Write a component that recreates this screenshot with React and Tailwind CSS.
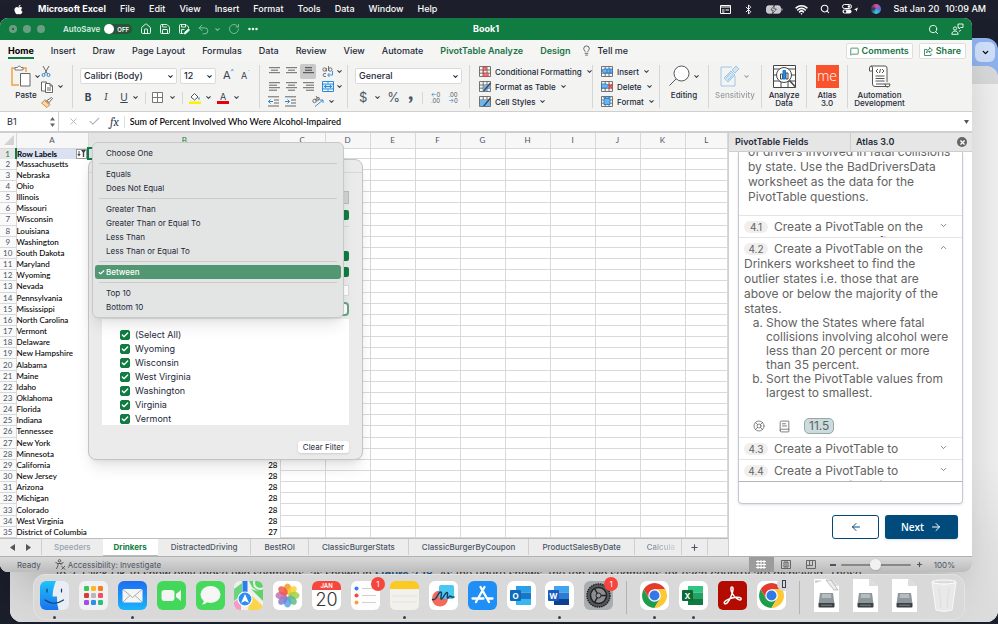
import { useState } from 'react';
import {
  ArrowLeft,
  ArrowRight,
  Bluetooth,
  BookText,
  Check,
  ChevronDown,
  ChevronUp,
  Ellipsis,
  House,
  LifeBuoy,
  Lightbulb,
  MessageSquare,
  Plus,
  RotateCw,
  Save,
  Search,
  Undo2,
  Wifi,
  X,
} from 'lucide-react';
import { FaApple } from 'react-icons/fa';

const menus = ['File', 'Edit', 'View', 'Insert', 'Format', 'Tools', 'Data', 'Window', 'Help'];
const ribbonTabs = ['Home', 'Insert', 'Draw', 'Page Layout', 'Formulas', 'Data', 'Review', 'View', 'Automate'];
const columns = ['C', 'D', 'E', 'F', 'G', 'H', 'I', 'J', 'K', 'L'];
const sheetRows = [
  'Row Labels', 'Massachusetts', 'Nebraska', 'Ohio', 'Illinois', 'Missouri', 'Wisconsin', 'Louisiana', 'Washington',
  'South Dakota', 'Maryland', 'Wyoming', 'Nevada', 'Pennsylvania', 'Mississippi', 'North Carolina', 'Vermont',
  'Delaware', 'New Hampshire', 'Alabama', 'Maine', 'Idaho', 'Oklahoma', 'Florida', 'Indiana', 'Tennessee', 'New York',
  'Minnesota', 'California', 'New Jersey', 'Arizona', 'Michigan', 'Colorado', 'West Virginia', 'District of Columbia',
];
const values = { 29: 28, 30: 28, 31: 28, 32: 28, 33: 28, 34: 28, 35: 27 };
const filterGroups = [
  ['Choose One'],
  ['Equals', 'Does Not Equal'],
  ['Greater Than', 'Greater Than or Equal To', 'Less Than', 'Less Than or Equal To'],
  ['Between'],
  ['Top 10', 'Bottom 10'],
];
const states = ['(Select All)', 'Wyoming', 'Wisconsin', 'West Virginia', 'Washington', 'Virginia', 'Vermont'];
const sheetTabs = ['DistractedDriving', 'BestROI', 'ClassicBurgerStats', 'ClassicBurgerByCoupon', 'ProductSalesByDate'];

function Caret({ className = 'text-gray-700' }) {
  return <ChevronDown size={7} strokeWidth={3.5} className={`shrink-0 ${className}`} />;
}

function RibbonIcon({ label, children, className = '' }) {
  return (
    <button type="button" aria-label={label} className={`flex items-center justify-center ${className}`}>
      {children}
    </button>
  );
}

function RibbonSelect({ label, value, className }) {
  return (
    <div className={`relative h-4 rounded-xs border border-[#dadada] bg-white ${className}`}>
      <select aria-label={label} defaultValue={value} className="block h-full w-full appearance-none pl-[3px] text-[9px] leading-[14px] font-medium text-gray-800">
        <option>{value}</option>
      </select>
      <Caret className="pointer-events-none absolute top-1 right-[2px] text-gray-800" />
    </div>
  );
}

function Lines({ rows, stroke = '#666' }) {
  return (
    <svg width="11" height="9" viewBox="0 0 11 9" stroke={stroke} fill="none">
      {rows.map(([x1, x2], i) => (
        <path key={i} d={`M${x1} ${i * 2.5 + 0.7}H${x2}`} />
      ))}
    </svg>
  );
}

function IndentIcon({ out }) {
  return (
    <svg width="12" height="11" viewBox="0 0 12 11" fill="none" stroke="#666">
      <path d="M0 .8h11M6 4h5M6 7h5M0 10h11" />
      <path d={out ? 'M5 5.5H.5M2.5 3.5l-2 2 2 2' : 'M0 5.5h4.5M2.5 3.5l2 2-2 2'} stroke="#2b88d8" />
    </svg>
  );
}

function TableIcon({ kind }) {
  return (
    <svg width="12" height="11" viewBox="0 0 12 11" fill="none" stroke="#555" strokeWidth=".8">
      <path d="M.5.5h11v10H.5zM.5 4h11M.5 7.2h11M4.2.5v10M8 .5v10" />
      {kind === 'cond' && <path d="M4.2 1h3v3h-3zM4.2 7.2h5v3h-5zM4.2 4v3.2" fill="#f08080" stroke="#d83b3b" />}
      {kind === 'format' && <path d="M5 4h6.5v3.2H5zM4.2 7.2H8v3H4.2z" fill="#6cb4ee" stroke="none" />}
      {kind === 'styles' && <path d="M1 4h10v6H1z" fill="#6cb4ee" stroke="none" />}
      {(kind === 'format' || kind === 'styles') && <path d="M11.5 2 6 8.5 4.6 10" stroke="#444" strokeWidth="1.3" />}
      {kind === 'insert' && <path d="M3 3h8.5v4H3L.5 5zM6 3v4M9 3v4" fill="#6cb4ee" stroke="#1976c9" />}
      {kind === 'delete' && (
        <>
          <path d="M.5 3h5l2 2-2 2h-5z" fill="#6cb4ee" stroke="#1976c9" />
          <path d="m7.5 3 4 4.5M11.5 3l-4 4.5" stroke="#e23b3b" strokeWidth="1.2" />
        </>
      )}
      {kind === 'size' && <path d="M3 2.5h6v6H3zM2 1.2h8" fill="#6cb4ee" stroke="#1976c9" />}
    </svg>
  );
}

function SmallCommand({ kind, children }) {
  return (
    <button type="button" className="flex h-[15px] items-center gap-1 text-[8px] font-medium whitespace-nowrap text-gray-800">
      <TableIcon kind={kind} />
      <span>{children}</span>
      <Caret />
    </button>
  );
}

function BigCommand({ icon, children, className = '' }) {
  return (
    <button type="button" className={`flex flex-col items-center text-[8px] leading-[8px] font-medium text-gray-800 ${className}`}>
      <span className="mb-[3px] flex h-6 items-center gap-[3px]">{icon}</span>
      {children}
    </button>
  );
}

function Divider() {
  return <div className="h-[43px] w-px shrink-0 bg-[#d6d6d6]" />;
}

function MenuBar() {
  return (
    <nav className="flex h-[18px] items-center justify-between bg-[#1d202c] pr-3 pl-[13px] text-[9px] font-medium whitespace-nowrap text-white">
      <div className="flex items-center gap-[14px]">
        <FaApple size={11} />
        <span className="font-bold">Microsoft Excel</span>
        {menus.map((item) => (
          <a key={item} href="#menu">{item}</a>
        ))}
      </div>
      <div className="flex items-center gap-3">
        <svg width="11" height="9" viewBox="0 0 11 9" fill="none" stroke="#fff">
          <path d="M.5.5h10v8H.5zM0 2h11M2 5h2.5M5.5 5H9M2 7h2.5" />
        </svg>
        <Bluetooth size={11} />
        <svg width="17" height="9" viewBox="0 0 17 9">
          <rect x=".5" y=".8" width="14" height="7.4" rx="2" fill="#c9cad0" stroke="#fff" strokeWidth=".6" />
          <path d="M15.5 3v3q1-.3 1-1.5t-1-1.5" fill="#c9cad0" />
          <path d="M8.5 0 5 5h2.3L6.3 9 10.3 4H7.7z" fill="#fff" stroke="#1d202c" strokeWidth=".7" />
        </svg>
        <Wifi size={13} strokeWidth={3} />
        <Search size={10} strokeWidth={2.5} />
        <svg width="17" height="10" viewBox="0 0 17 10">
          <rect x=".5" y=".5" width="9" height="4" rx="2" fill="none" stroke="#fff" />
          <circle cx="7" cy="2.5" r="1.3" fill="#fff" />
          <rect x=".5" y="5.5" width="9" height="4" rx="2" fill="#fff" />
          <circle cx="3" cy="7.5" r="1.2" fill="#1d202c" />
          <path d="m12 5.5 4-2-1.5 4.2-.6-1.8z" fill="#fff" />
        </svg>
        <span className="size-[10px] rounded-full bg-[conic-gradient(#e84f8a,#5a6cf0,#36d6d0,#263060,#e84f8a)]" />
        <span className="flex gap-[6px]">
          <span>Sat Jan 20</span>
          <span>10:09 AM</span>
        </span>
      </div>
    </nav>
  );
}

function BrowserWindow() {
  return (
    <div className="absolute top-[38px] right-0 bottom-[2px] left-[10px] flex flex-col overflow-hidden rounded-xl bg-[#8fb3ee]">
      <div className="flex h-7 shrink-0 items-start justify-end pt-1 pr-[3px]">
        <button type="button" aria-label="Search tabs" className="flex size-5 items-center justify-center rounded-md bg-[#d0e0fa]">
          <ChevronDown size={9} strokeWidth={3.5} />
        </button>
      </div>
      <div className="flex flex-1 flex-col overflow-hidden rounded-t-xl bg-[#f1f1f1]">
        <div className="h-[18px] shrink-0 bg-[#d9dadc]" />
        <div className="flex flex-1 items-end bg-linear-to-t from-[#dcdcdc] to-[#f1f1f1] to-30% pb-[41px] pl-[46px]">
          <p className="text-[11px] leading-[14px] whitespace-nowrap text-[#333]">
            to 2. Click OK to show only those two segments, as shown in <a href="#figure" className="font-bold text-[#1f5d94]">Figure 2.18</a>. As the figure shows, the top two segments for each country are displayed. These
          </p>
        </div>
      </div>
    </div>
  );
}

function TitleBar() {
  return (
    <header className="grid h-[22px] grid-cols-[1fr_auto_1fr] items-center bg-[#107c41] text-white">
      <div className="flex items-center pl-[9px]">
        <div className="flex gap-[6px]">
          <span className="flex size-2 items-center justify-center rounded-full bg-[#6a9e81]">
            <span className="size-[2px] rounded-full bg-[#1d4d33]" />
          </span>
          <span className="size-2 rounded-full bg-[#6a9e81]" />
          <span className="size-2 rounded-full bg-[#6a9e81]" />
        </div>
        <label htmlFor="autosave" className="ml-[18px] text-[8px] font-semibold text-[#d8ebe0]">AutoSave</label>
        <span className="ml-1 flex h-[10px] w-7 items-center gap-[3px] rounded-full bg-[#29513b] text-[6px] font-semibold">
          <input id="autosave" type="checkbox" role="switch" className="size-[10px] appearance-none rounded-full bg-white" />
          OFF
        </span>
        <div className="ml-2 flex items-center gap-[7px]">
          <House size={12} strokeWidth={1.8} />
          <Save size={12} strokeWidth={1.8} />
          <svg width="12" height="12" viewBox="0 0 24 24" fill="none" stroke="currentColor" strokeWidth="1.8">
            <path d="M11 21H5a2 2 0 0 1-2-2V5a2 2 0 0 1 2-2h11l5 5v3M7 3v5h8V3M7 21v-8h6" />
            <path d="m13 22 1-4 7-6 2 2-7 7z" fill="currentColor" />
          </svg>
          <span className="flex items-center gap-1 opacity-50">
            <Undo2 size={13} strokeWidth={1.8} />
            <Caret className="text-white" />
          </span>
          <RotateCw size={12} strokeWidth={1.8} className="opacity-50" />
          <Ellipsis size={12} strokeWidth={3} />
        </div>
      </div>
      <h1 className="text-[9px] font-bold">Book1</h1>
      <div className="flex items-center justify-end gap-3 pr-2">
        <Search size={11} strokeWidth={2} />
        <svg width="13" height="12" viewBox="0 0 13 12" fill="none" stroke="currentColor" strokeWidth=".9">
          <circle cx="4" cy="5.5" r="1.6" />
          <path d="M.8 11.3c0-4.3 6.4-4.3 6.4 0zM7 1h5v3.500H9.500L8 6V4.500H7zM8 8.500l2-1.500" />
        </svg>
      </div>
    </header>
  );
}

function RibbonTabs() {
  return (
    <div className="flex h-[21px] items-center justify-between bg-[#f5f5f4] pr-[6px] pl-2">
      <div className="flex h-full items-center gap-[17px] text-[9px] font-medium whitespace-nowrap text-gray-800">
        {ribbonTabs.map((tab) => (
          <button
            key={tab}
            type="button"
            className={tab === 'Home' ? 'border-b-2 border-[#107c41] pt-[2px] font-bold text-black' : ''}
          >
            {tab}
          </button>
        ))}
        <button type="button" className="font-semibold text-[#217346]">PivotTable Analyze</button>
        <button type="button" className="font-semibold text-[#217346]">Design</button>
        <button type="button" className="-ml-[6px] flex items-center gap-[5px]">
          <Lightbulb size={11} strokeWidth={1.5} />
          Tell me
        </button>
      </div>
      <div className="flex gap-[6px] pt-px text-[9px] font-semibold text-[#217346]">
        <button type="button" className="flex h-4 items-center gap-[3px] rounded-xs border border-[#dedede] bg-white px-[3px]">
          <MessageSquare size={9} />
          Comments
        </button>
        <button type="button" className="flex h-4 items-center gap-[3px] rounded-xs border border-[#dedede] bg-white px-1">
          <svg width="9" height="9" viewBox="0 0 9 9" fill="none" stroke="currentColor">
            <path d="M3 2.5H.5v6h6.500V6.500M5.500.5l3 2.500-3 2.500V4Q3.500 4 2.500 6q0-3.500 3-4z" strokeWidth=".8" />
          </svg>
          Share
        </button>
      </div>
    </div>
  );
}

function Ribbon() {
  return (
    <div className="flex h-[51px] items-center border-b border-[#cfcfcf] bg-[#f3f3f2] pt-px">
      <div className="flex h-full w-[72px] shrink-0 items-center justify-between pr-2 pl-[11px]">
        <BigCommand
          className="self-start pt-[2px]"
          icon={
            <>
              <svg width="20" height="22" viewBox="0 0 20 22" fill="none">
                <path d="M8 20H1V3h14v4" stroke="#f0a33c" strokeWidth="1.5" />
                <path d="M4 5V2.500h2.500a1.800 1.800 0 0 1 3.500 0H12V5z" fill="#fff" stroke="#777" />
                <path d="M9.500 8.500h9.500v12.500H9.500z" fill="#fff" stroke="#666" />
              </svg>
              <Caret />
            </>
          }
        >
          Paste
        </BigCommand>
        <div className="flex flex-col items-start gap-1">
          <RibbonIcon label="Cut">
            <svg width="10" height="11" viewBox="0 0 10 11" fill="none" stroke="#666">
              <path d="m2 0 4.500 8M8 0 3.500 8" />
              <circle cx="2.500" cy="9" r="1.500" stroke="#2b88d8" />
              <circle cx="7.500" cy="9" r="1.500" stroke="#2b88d8" />
            </svg>
          </RibbonIcon>
          <RibbonIcon label="Copy" className="gap-1">
            <svg width="12" height="12" viewBox="0 0 12 12" fill="#fff" stroke="#666">
              <path d="M.5 1h5v9h-5z" />
              <path d="M4.500 2.500H9L11.500 5v6.500h-7zM9 2.500V5h2.500M6 7h4M6 9h4" />
            </svg>
            <Caret />
          </RibbonIcon>
          <RibbonIcon label="Format Painter">
            <svg width="12" height="11" viewBox="0 0 12 11" fill="none" stroke="#666">
              <path d="M6 3.500 8 5.500 11.500 1.500 10.500.5z" fill="#fff" />
              <path d="m4 2.500 5 5" />
              <path d="M3.500 3.500 8.500 8 6 10.500.5 6z" fill="#fbd9a8" stroke="#e8872b" />
            </svg>
          </RibbonIcon>
        </div>
      </div>
      <Divider />

      <div className="flex w-[186px] shrink-0 flex-col gap-[6px] pl-[7px] text-gray-700">
        <div className="flex h-4 items-center gap-[3px]">
          <RibbonSelect label="Font" value="Calibri (Body)" className="w-[97px]" />
          <RibbonSelect label="Font size" value="12" className="w-9" />
          <RibbonIcon label="Increase font size" className="pl-1 text-[11px]">A<sup className="text-[7px] text-[#2b88d8]">^</sup></RibbonIcon>
          <RibbonIcon label="Decrease font size" className="pl-1 text-[9px]">A<sup className="text-[6px] text-[#2b88d8]">ˇ</sup></RibbonIcon>
        </div>
        <div className="flex h-4 items-center text-[10px]">
          <RibbonIcon label="Bold" className="w-4 font-bold">B</RibbonIcon>
          <RibbonIcon label="Italic" className="w-5 font-serif italic">I</RibbonIcon>
          <RibbonIcon label="Underline" className="w-4 underline">U</RibbonIcon>
          <Caret className="text-gray-700" />
          <span className="mx-[6px] h-3 w-px bg-[#d6d6d6]" />
          <RibbonIcon label="Borders" className="gap-[6px]">
            <svg width="11" height="11" viewBox="0 0 11 11" fill="#fff" stroke="#777">
              <path d="M.5.5h10v10H.5zM5.5.5v10M.5 5.5h10" />
            </svg>
            <Caret />
          </RibbonIcon>
          <span className="mx-[6px] h-3 w-px bg-[#d6d6d6]" />
          <RibbonIcon label="Fill colour" className="gap-1">
            <svg width="12" height="12" viewBox="0 0 12 12" fill="none" stroke="#555">
              <path d="m2 5 3.500-3.500L9 5 5.500 8z" fill="#fff" />
              <path d="M10 5.500v2" stroke="#2b88d8" strokeWidth="1.300" />
              <path d="M0 10.800h12" stroke="#fff200" strokeWidth="2.400" />
            </svg>
            <Caret />
          </RibbonIcon>
          <RibbonIcon label="Font colour" className="ml-[5px] gap-1">
            <span className="w-3 border-b-[3px] border-red-600 text-[9px] leading-[9px]">A</span>
            <Caret />
          </RibbonIcon>
        </div>
      </div>
      <Divider />

      <div className="grid w-[87px] shrink-0 grid-cols-[16px_16px_16px_auto] grid-rows-3 items-center gap-x-px pl-[6px]">
        <RibbonIcon label="Top align" className="h-[15px]"><Lines rows={[[0, 11], [2, 9], [0, 11]]} /></RibbonIcon>
        <RibbonIcon label="Middle align" className="h-[15px]"><Lines rows={[[0, 11], [2, 9], [0, 11]]} /></RibbonIcon>
        <RibbonIcon label="Bottom align" className="h-[15px] rounded-xs bg-[#c9c9c9]"><Lines rows={[[2, 9], [2, 9], [0, 11]]} stroke="#444" /></RibbonIcon>
        <RibbonIcon label="Wrap text" className="gap-[2px]">
          <svg width="12" height="12" viewBox="0 0 12 12" fill="none" stroke="#666" strokeWidth=".9">
            <circle cx="2.500" cy="3.500" r="1.700" />
            <path d="M4.300 2v3.500M6.500 0v5M4 7.500q-3-.5-3 1.500t3 1.500" />
            <circle cx="8.300" cy="3.500" r="1.700" />
            <path d="M10.500 5v4H6M7.500 7 5.700 9l1.800 2" stroke="#2b88d8" />
          </svg>
          <Caret />
        </RibbonIcon>
        <RibbonIcon label="Align left" className="h-[15px]"><Lines rows={[[0, 11], [0, 8], [0, 11], [0, 8]]} /></RibbonIcon>
        <RibbonIcon label="Centre" className="h-[15px]"><Lines rows={[[0, 11], [2, 9], [0, 11], [2, 9]]} /></RibbonIcon>
        <RibbonIcon label="Align right" className="h-[15px]"><Lines rows={[[0, 11], [3, 11], [0, 11], [3, 11]]} /></RibbonIcon>
        <RibbonIcon label="Merge" className="gap-[2px]">
          <svg width="12" height="11" viewBox="0 0 12 11" fill="#fff" stroke="#2b88d8">
            <path d="M.5.5h11v10H.5zM6 .5v2M6 8.500v2" />
            <path d="M.5 3h11v5H.5z" fill="#cfe6fa" />
            <path d="M2.500 5.500h7M4 4 2.500 5.500 4 7M8 4l1.500 1.500L8 7" />
          </svg>
          <Caret />
        </RibbonIcon>
        <RibbonIcon label="Decrease indent" className="h-[15px]"><IndentIcon out /></RibbonIcon>
        <RibbonIcon label="Increase indent" className="h-[15px]"><IndentIcon /></RibbonIcon>
        <RibbonIcon label="Orientation" className="col-span-2 gap-[4px]">
          <svg width="12" height="11" viewBox="0 0 12 11" fill="none" stroke="#666" strokeWidth=".9">
            <circle cx="2.500" cy="5" r="1.700" />
            <circle cx="6" cy="2.800" r="1.500" />
            <path d="m3 2.500 2 3M4 0l3 4" />
            <path d="M3 10.500 11 4M8 4h3v3" stroke="#2b88d8" />
          </svg>
          <Caret />
        </RibbonIcon>
      </div>
      <Divider />

      <div className="flex w-[121px] shrink-0 flex-col gap-[6px] px-[7px]">
        <RibbonSelect label="Number format" value="General" className="w-full" />
        <div className="flex h-4 items-center text-gray-600">
          <RibbonIcon label="Currency" className="gap-[7px] pl-1 text-[13px]">$<Caret /></RibbonIcon>
          <RibbonIcon label="Percent" className="ml-[6px] text-[13px]">%</RibbonIcon>
          <RibbonIcon label="Comma style" className="ml-2 h-5 pb-3 font-serif text-[24px] leading-[10px] font-bold">,</RibbonIcon>
          <span className="ml-2 h-3 w-px bg-[#d6d6d6]" />
          <RibbonIcon label="Increase decimal" className="ml-2 flex-col text-[6px] leading-[6px]">
            <span><span className="text-[#2b88d8]">←</span>0</span>
            <span>.00</span>
          </RibbonIcon>
          <RibbonIcon label="Decrease decimal" className="ml-2 flex-col text-[6px] leading-[6px]">
            <span>.00</span>
            <span><span className="text-[#2b88d8]">→</span>0</span>
          </RibbonIcon>
        </div>
      </div>
      <Divider />

      <div className="w-[122px] shrink-0 pl-[9px]">
        <SmallCommand kind="cond">Conditional Formatting</SmallCommand>
        <SmallCommand kind="format">Format as Table</SmallCommand>
        <SmallCommand kind="styles">Cell Styles</SmallCommand>
      </div>
      <Divider />
      <div className="w-[66px] shrink-0 pl-2">
        <SmallCommand kind="insert">Insert</SmallCommand>
        <SmallCommand kind="delete">Delete</SmallCommand>
        <SmallCommand kind="size">Format</SmallCommand>
      </div>
      <Divider />

      <BigCommand
        className="w-12 self-start pt-[2px]"
        icon={
          <>
            <svg width="21" height="22" viewBox="0 0 21 22" fill="none" stroke="#555">
              <circle cx="12.500" cy="8.500" r="7.500" fill="#fff" />
              <path d="m7 14-6.500 6.500" />
            </svg>
            <Caret />
          </>
        }
      >
        Editing
      </BigCommand>
      <Divider />
      <BigCommand
        className="w-[52px] self-start pt-[2px] opacity-45"
        icon={
          <>
            <svg width="20" height="22" viewBox="0 0 20 22" fill="none" stroke="#3a96dd">
              <path d="M12 2H1v19h14V11" />
              <path d="m4 13 7-7 4 4-7 7zM12 5l4-4 3 3-4 4z" fill="#a9d3f5" />
              <path d="m6 13 5-5M8 15l5-5" />
            </svg>
            <Caret />
          </>
        }
      >
        Sensitivity
      </BigCommand>
      <Divider />
      <BigCommand
        className="w-11 self-start pt-[2px]"
        icon={
          <svg width="23" height="23" viewBox="0 0 23 23" fill="#fff" stroke="#444">
            <path d="M.5.5h22v22H.5zM.5 4h22M.5 10h22M.5 16h22M8 16v6M15 16v6" />
            <circle cx="11" cy="10" r="7.500" />
            <path d="m16.500 15.500 5.500 6" strokeWidth="1.500" />
            <path d="M7.500 9v5h2V9zM13 8v6h2V8z" />
            <path d="M10 5.500V14h2.500V5.500z" fill="#2b88d8" stroke="#1976c9" />
          </svg>
        }
      >
        <span>Analyze<br />Data</span>
      </BigCommand>
      <Divider />
      <BigCommand
        className="w-10 self-start pt-[2px]"
        icon={<span className="flex size-[23px] items-center justify-center bg-[#f8532d] pb-px font-['Open_Sans'] text-[14px] font-light text-white">me</span>}
      >
        <span>Atlas<br />3.0</span>
      </BigCommand>
      <Divider />
      <BigCommand
        className="w-[63px] self-start pt-[2px]"
        icon={
          <svg width="23" height="23" viewBox="0 0 23 23" fill="#fff" stroke="#555">
            <path d="M4.500 6V19q0 2.500 2.500 2.500h13M4.500 6H1.500V3q0-2 2-2H17q2 0 2 2v14M4.500 6V3q0-2-1.500-2M8 19h14q0 3-2.500 3t-2.500-3" />
            <path d="m10 4-2 2 2 2M14 4l2 2-2 2M12.500 4l-1 4M7.500 11h9M7.500 13.500h9M7.500 16h9" />
          </svg>
        }
      >
        <span>Automation<br />Development</span>
      </BigCommand>
    </div>
  );
}

function FormulaBar() {
  return (
    <div className="flex h-[21px] items-center border-b-2 border-[#cfcfcf] bg-white text-gray-800">
      <div className="flex h-full w-[59px] items-center justify-between border-r border-[#cfcfcf] pr-[3px] pl-[7px]">
        <input aria-label="Name box" defaultValue="B1" className="w-8 text-[9px]" />
        <svg width="5" height="12" viewBox="0 0 5 12" fill="#666">
          <path d="M2.500 1 5 4.500H0zM2.500 11 5 7.500H0z" />
        </svg>
      </div>
      <div className="flex flex-1 items-center pl-[9px] text-[#b5b5b5]">
        <X size={11} />
        <Check size={13} className="ml-[9px]" />
        <span className="ml-[9px] font-serif text-[12px] text-gray-700 italic">fx</span>
        <span className="mx-[5px] h-3 w-px bg-[#ddd]" />
        <input
          aria-label="Formula"
          defaultValue="Sum of Percent Involved Who Were Alcohol-Impaired"
          className="flex-1 font-['Lato'] text-[9px] font-medium text-black"
        />
      </div>
      <svg width="5" height="4" viewBox="0 0 5 4" className="mr-[3px]" fill="#555">
        <path d="M0 0h5L2.500 4z" />
      </svg>
    </div>
  );
}

function Sheet() {
  return (
    <div className="grid min-h-0 flex-1 overflow-hidden bg-white">
      <table className="h-full w-full table-fixed border-collapse font-['Lato'] text-[8px] leading-[10px] text-black">
        <colgroup>
          <col className="w-4" />
          <col className="w-[72px]" />
          <col className="w-[192px]" />
          {columns.map((c) => (
            <col key={c} className={c === 'L' ? '' : 'w-[45px]'} />
          ))}
        </colgroup>
        <thead>
          <tr className="h-[15px] bg-[#f7f7f7] text-gray-600">
            <th className="border-r border-b border-[#d8d8d8] p-0">
              <svg width="10" height="10" viewBox="0 0 10 10" className="ml-1" fill="#d3d3d3"><path d="M10 0v10H0z" /></svg>
            </th>
            <th className="border-r border-b border-[#d8d8d8] p-0 font-normal">A</th>
            <th className="border-b-2 border-[#107c41] bg-[#e4e4e4] p-0 font-normal text-[#107c41]">B</th>
            {columns.map((c) => (
              <th key={c} className="border-r border-b border-[#d8d8d8] p-0 font-normal">{c}</th>
            ))}
          </tr>
        </thead>
        <tbody>
          {sheetRows.map((name, i) => (
            <tr key={name}>
              <th
                scope="row"
                className={
                  i === 0
                    ? 'border-r-2 border-r-[#107c41] bg-[#e6e6e6] p-0 font-normal text-[#107c41]'
                    : 'border-r border-b border-[#d8d8d8] bg-[#fafafa] p-0 font-normal text-gray-600'
                }
              >
                {i + 1}
              </th>
              <td className={`p-0 whitespace-nowrap ${i === 0 ? 'bg-[#d9e1f2] font-bold' : 'overflow-visible font-medium'}`}>
                {i === 0 ? (
                  <span className="flex items-center justify-between">
                    {name}
                    <button type="button" aria-label="Filter Row Labels" className="flex h-[10px] w-[11px] items-center justify-center border border-[#999] bg-white">
                      <svg width="9" height="7" viewBox="0 0 9 7" fill="#444"><path d="M4 0h5L7.200 2.500V7h-1.400V2.500zM1.500 1v3H.3L2 6.500 3.700 4H2.500V1z" /></svg>
                    </button>
                  </span>
                ) : (
                  name
                )}
              </td>
              <td className={`p-0 pr-[2px] text-right font-medium ${i === 0 ? 'border-2 border-[#107c41] bg-[#d9e1f2]' : ''}`}>{values[i + 1]}</td>
              {columns.map((c) => (
                <td key={c} className="border border-[#d9d9d9] p-0" />
              ))}
            </tr>
          ))}
        </tbody>
      </table>
    </div>
  );
}

function SheetTabs() {
  return (
    <div className="flex h-[18px] shrink-0 items-start overflow-hidden border-t border-[#bdbdbd] bg-[#ededed] text-[8px] leading-[16px] font-medium whitespace-nowrap text-gray-600">
      <div className="flex h-4 w-[41px] shrink-0 items-center justify-between px-[10px]">
        <svg width="5" height="7" viewBox="0 0 5 7" fill="#555"><path d="M5 0v7L0 3.500z" /></svg>
        <svg width="5" height="7" viewBox="0 0 5 7" fill="#555"><path d="M0 0v7l5-3.500z" /></svg>
      </div>
      <button type="button" className="border-l border-[#cfcfcf] px-3 text-gray-400">Speeders</button>
      <button type="button" className="border-b border-[#bbb] bg-white px-[11px] font-bold text-[#107c41]">Drinkers</button>
      {sheetTabs.map((tab) => (
        <button key={tab} type="button" className="border-r border-[#cfcfcf] px-[13px]">{tab}</button>
      ))}
      <button type="button" className="min-w-0 flex-1 overflow-hidden border-r border-[#cfcfcf] bg-linear-to-r from-gray-600 to-gray-200 bg-clip-text pl-3 text-left text-transparent">Calcula</button>
      <button type="button" aria-label="Add sheet" className="flex h-4 w-[26px] shrink-0 items-center justify-center border-r border-[#cfcfcf]">
        <Plus size={9} strokeWidth={3} />
      </button>
      <span className="w-5 shrink-0" />
    </div>
  );
}

function FilterDialog({ checked, onToggle }) {
  return (
    <section aria-label="Filter" className="absolute top-[141px] left-[88px] flex h-[301px] w-[275px] flex-col rounded-lg border border-[#c4c4c4] bg-[#ebebeb] px-[13px] pb-[6px] shadow-lg">
      <div className="-mx-[13px] h-[13px] border-b border-[#d8d8d8]" />
      <div className="flex h-[146px] flex-col items-end">
        <button type="button" aria-label="Sort" className="mt-[18px] h-[13px] w-[120px] border border-[#bbb] bg-[#d2d2d2]" />
        <button type="button" aria-label="By" className="mt-[6px] h-[10px] w-3 rounded-xs bg-[#107c41]" />
        <div className="mt-[6px] w-full border-b border-[#d8d8d8]" />
        <button type="button" aria-label="Field" className="mt-6 h-[10px] w-3 rounded-xs bg-[#107c41]" />
        <button type="button" aria-label="Condition" className="mt-[6px] h-[10px] w-3 rounded-xs bg-[#107c41]" />
        <input aria-label="Value" className="mt-2 h-[11px] w-[120px] border border-[#ddd] bg-white" />
        <input aria-label="Search" className="mt-[6px] h-[14px] w-[120px] shrink-0 rounded-[4px] border-2 border-[#66a583] bg-white" />
      </div>
      <div className="h-[106px] bg-white pt-[9px] pl-[18px]">
        {states.map((state) => (
          <label key={state} className="flex h-[14px] items-center gap-[5px] text-[9px] text-gray-800">
            <span className="grid place-items-center">
              <input
                type="checkbox"
                checked={checked[state]}
                onChange={() => onToggle(state)}
                className="col-start-1 row-start-1 size-[10px] appearance-none rounded-[2px] border border-[#107c41] bg-white checked:bg-[#107c41]"
              />
              <Check size={8} strokeWidth={4} className="pointer-events-none col-start-1 row-start-1 text-white" />
            </span>
            {state}
          </label>
        ))}
      </div>
      <button type="button" className="mt-auto h-3 self-end rounded-[3px] bg-white px-[5px] text-[8px] leading-[12px] text-gray-800 shadow-sm">Clear Filter</button>
    </section>
  );
}

function FilterMenu({ selected, onSelect }) {
  return (
    <div role="listbox" aria-label="Filter condition" className="absolute top-[124px] left-[92px] w-[252px] rounded-md border border-[#c8c8c8] bg-[#e3e4e4] px-[2px] py-[3px] text-[8px] leading-[14px] text-gray-800 shadow-lg">
      {filterGroups.map((group, i) => (
        <div key={group[0]}>
          {i > 0 && <div className="mx-1 flex h-[7px] items-center"><span className="h-px w-full bg-[#cbcbcb]" /></div>}
          {group.map((option) => (
            <button
              key={option}
              type="button"
              role="option"
              aria-selected={option === selected}
              onClick={() => onSelect(option)}
              className={`flex h-[14px] w-full items-center rounded-[3px] pl-[3px] ${option === selected ? 'bg-[#519872] font-medium text-white' : ''}`}
            >
              <span className="w-2">{option === selected && <Check size={7} strokeWidth={4} />}</span>
              {option}
            </button>
          ))}
        </div>
      ))}
    </div>
  );
}

function Step({ number, text, more, open }) {
  const Icon = open ? ChevronUp : ChevronDown;
  return (
    <div className={`flex shrink-0 border-t border-[#e4e4e4] pt-[3px] pl-[5px] ${open ? '' : 'h-[22px] overflow-hidden'}`}>
      <p className="min-w-0 flex-1 leading-[15px]">
        <span className="mr-[6px] inline-block h-3 w-6 rounded-full bg-[#f0efed] text-center text-[10px] leading-[12px]">{number}</span>
        {text}
        <br />
        {more}
      </p>
      <Icon size={9} className="mt-[2px] mr-[14px] shrink-0" />
    </div>
  );
}

function TaskPane() {
  return (
    <aside className="flex w-[244px] shrink-0 flex-col border-l border-[#cfcfcf] bg-white">
      <div className="flex h-[19px] shrink-0 items-center border-b border-[#d0d0d0] bg-[#e6e6e6] text-[9px] font-semibold text-gray-800">
        <button type="button" className="h-full w-[122px] border-r border-[#cfcfcf] pl-[6px] text-left">PivotTable Fields</button>
        <button type="button" className="h-full flex-1 pl-[5px] text-left">Atlas 3.0</button>
        <button type="button" aria-label="Close pane" className="mr-[5px] flex size-[10px] items-center justify-center rounded-full bg-[#666] text-white">
          <X size={7} strokeWidth={4} />
        </button>
      </div>
      <div className="mx-[9px] flex h-[352px] flex-col overflow-hidden rounded-b-[4px] border border-t-0 border-[#c3c8d2] text-[12px] leading-[14px] text-[#636363] shadow-sm">
        <div className="flex h-[63px] shrink-0 items-end pb-[11px] pl-[9px]">
          <p className="leading-[15px] whitespace-nowrap">
            of drivers involved in fatal collisions<br />
            by state. Use the BadDriversData<br />
            worksheet as the data for the<br />
            PivotTable questions.
          </p>
        </div>
        <Step number="4.1" text="Create a PivotTable on the" more="Speeders worksheet to find" />
        <Step
          open
          number="4.2"
          text="Create a PivotTable on the"
          more={
            <span className="whitespace-nowrap">
              Drinkers worksheet to find the<br />
              outlier states i.e. those that are<br />
              above or below the majority of the<br />
              states.
            </span>
          }
        />
        <ol className="list-[lower-alpha] pl-[27px] whitespace-nowrap">
          <li>Show the States where fatal<br />collisions involving alcohol were<br />less than 20 percent or more<br />than 35 percent.</li>
          <li>Sort the PivotTable values from<br />largest to smallest.</li>
        </ol>
        <div className="mt-auto flex items-center gap-[13px] pb-[3px] pl-[14px]">
          <LifeBuoy size={12} strokeWidth={1.5} />
          <BookText size={13} strokeWidth={1.5} />
          <span className="rounded-[5px] border border-[#9aa5a6] bg-[#cbdcde] px-1">11.5</span>
        </div>
        <Step number="4.3" text="Create a PivotTable to" more="have the 10 states that have the" />
        <Step number="4.4" text="Create a PivotTable to" more="have the 10 states in which the" />
        <div className="h-[22px] shrink-0 border-t border-[#b5b5b5]" />
      </div>
      <div className="mt-[11px] mr-[14px] flex justify-end gap-[6px] text-[11px] font-semibold">
        <button type="button" aria-label="Back" className="flex h-6 w-[47px] items-center justify-center rounded-[3px] border border-[#00497a] text-[#00497a]">
          <ArrowLeft size={12} />
        </button>
        <button type="button" className="flex h-6 w-[73px] items-center justify-center gap-[6px] rounded-[3px] bg-[#004b7c] font-['Open_Sans'] text-[10px] text-white shadow">
          Next
          <ArrowRight size={12} />
        </button>
      </div>
    </aside>
  );
}

function StatusBar() {
  return (
    <footer className="flex h-4 shrink-0 items-center justify-between border-t border-[#b0b0b0] bg-linear-to-b from-[#d9d9d9] to-[#bcbcbc] px-[17px] text-[8px] text-gray-600">
      <div className="flex items-center">
        <span>Ready</span>
        <svg width="11" height="11" viewBox="0 0 11 11" className="mr-[2px] ml-[14px]" fill="none" stroke="#555">
          <circle cx="4.500" cy="1.800" r="1.200" />
          <path d="M.5 3.500 3 4.500v2L1.500 10M8.500 3.500 6 4.500V6M3 4.500h3M6.500 7l3.500 3.500M10 7l-3.500 3.500" />
        </svg>
        <span>Accessibility: Investigate</span>
      </div>
      <div className="flex h-full items-center">
        <button type="button" aria-label="Normal view" className="flex h-full w-[25px] items-center justify-center bg-[#9c9c9c]">
          <svg width="10" height="9" viewBox="0 0 10 9" fill="none" stroke="#fff"><path d="M0 1.500h10M0 4.500h10M0 7.500h10M2 0v9M5 0v9M8 0v9" /></svg>
        </button>
        <button type="button" aria-label="Page layout view" className="flex w-[25px] justify-center">
          <svg width="10" height="9" viewBox="0 0 10 9" fill="none" stroke="#666"><path d="M.5.5h9v8h-9zM3 2h4v5H3zM5 2v5" /></svg>
        </button>
        <button type="button" aria-label="Page break view" className="flex w-[25px] justify-center">
          <svg width="10" height="9" viewBox="0 0 10 9" fill="none" stroke="#666"><path d="M.5.5h9v8h-9zM.5 5.500h6v-5M3.500.5v5" /></svg>
        </button>
        <span className="ml-[6px] h-[2px] w-[6px] bg-gray-600" />
        <input
          type="range"
          aria-label="Zoom"
          className="mx-[5px] h-[2px] w-[70px] appearance-none rounded-full bg-[#888] [&::-webkit-slider-thumb]:size-[11px] [&::-webkit-slider-thumb]:appearance-none [&::-webkit-slider-thumb]:rounded-full [&::-webkit-slider-thumb]:bg-[#f2f2f2] [&::-webkit-slider-thumb]:shadow"
        />
        <Plus size={7} strokeWidth={4} />
        <span className="ml-[11px]">100%</span>
      </div>
    </footer>
  );
}

function ChromeIcon() {
  return (
    <svg viewBox="0 0 29 29" className="size-full">
      <rect width="29" height="29" rx="7" fill="#fff" />
      <path d="M14.500 14.500 3.700 8.250A12.500 12.500 0 0 1 25.300 8.250H14.500z" fill="#e33b2e" />
      <path d="M14.500 14.500v12.500A12.500 12.500 0 0 1 3.700 8.250l5.400 9.400z" fill="#1e9e4a" />
      <path d="M3.700 8.250 9.100 17.600 14.500 8.250z" fill="#e33b2e" />
      <path d="M14.500 27l5.400-9.400H9.100z" fill="#1e9e4a" />
      <path d="M14.500 8.250h10.800q1.700 2.900 1.700 6.250A12.500 12.500 0 0 1 14.500 27l5.400-9.400q2-6-5.400-9.350" fill="#fcc934" />
      <circle cx="14.500" cy="14.500" r="6.200" fill="#fff" />
      <circle cx="14.500" cy="14.500" r="5" fill="#3478e8" />
    </svg>
  );
}

function OfficeIcon({ letter, colors }) {
  return (
    <svg viewBox="0 0 29 29" className="size-full">
      <rect width="29" height="29" rx="7" fill="#fff" />
      <path d="M9 5h15v6.500H9z" fill={colors[0]} />
      <path d="M9 11.500h15V18H9z" fill={colors[1]} />
      <path d="M9 18h15v6H9z" fill={colors[2]} />
      <rect x="3" y="9" width="11" height="11" rx="1" fill={colors[3]} />
      <text x="8.500" y="17.500" textAnchor="middle" fill="#fff" fontSize="8" fontWeight="700" fontFamily="Inter, sans-serif">{letter}</text>
    </svg>
  );
}

function DiskFileIcon({ torn }) {
  return (
    <svg width="25" height="33" viewBox="0 0 25 33" className="shrink-0">
      <path d="M0 0h16l9 7v26H0z" fill="#fff" />
      <path d="M16 0v7h9z" fill="#ddd" />
      {torn && <path d="m12 1 8 10h4L17 1zM1 2h6M1 3h3" stroke="#999" strokeWidth=".6" fill="#eee" />}
      <path d="M6 14h13l1.500 11h-16z" fill="#8d979c" />
      <path d="M8 15h9l.5 4h-10z" fill="#b4bcc0" />
      <rect x="4.500" y="24" width="16" height="4.500" rx="1" fill="#3c4042" />
      <path d="M7 26.200h11" stroke="#8d979c" strokeWidth=".8" />
    </svg>
  );
}

const launchColors = ['#35c759', '#fdb827', '#f57c1f', '#d83b3b', '#b8b8b8', '#f04f60', '#a04fe0', '#2d8cf0', '#2bbf7a'];
const petals = ['#f59a23', '#f8d230', '#a6cf45', '#5bbd8a', '#5aa5dd', '#7d7fd0', '#c46fb5', '#ee5a4a'];

const dockIcons = {
  Finder: (
    <svg viewBox="0 0 29 29" className="size-full">
      <defs>
        <clipPath id="finder"><rect width="29" height="29" rx="6" /></clipPath>
        <linearGradient id="finderBlue" x2="0" y2="1"><stop stopColor="#1fc3fb" /><stop offset="1" stopColor="#1a72ee" /></linearGradient>
      </defs>
      <g clipPath="url(#finder)">
        <path d="M0 0h29v29H0z" fill="#e9eef5" />
        <path d="M0 0h16q-3 6-3.500 15.500H17Q16.500 22 18.500 29H0z" fill="url(#finderBlue)" />
      </g>
      <path d="M7 8v3M21.500 8v3M5 19q9 6.500 18.500 0" fill="none" stroke="#163a66" strokeWidth="1.200" strokeLinecap="round" />
    </svg>
  ),
  Launchpad: (
    <svg viewBox="0 0 29 29" className="size-full">
      <rect width="29" height="29" rx="6" fill="#f1f1f3" />
      {launchColors.map((c, i) => (
        <rect key={c} x={5 + (i % 3) * 7} y={5 + Math.floor(i / 3) * 7} width="5" height="5" rx="1.300" fill={c} />
      ))}
    </svg>
  ),
  Mail: (
    <svg viewBox="0 0 29 29" className="size-full">
      <defs><linearGradient id="mail" x2="0" y2="1"><stop stopColor="#1d6df2" /><stop offset="1" stopColor="#1bb4fa" /></linearGradient></defs>
      <rect width="29" height="29" rx="6" fill="url(#mail)" />
      <rect x="4.500" y="8" width="20" height="13.500" rx="1.500" fill="#f5f5f5" />
      <path d="m5 8.500 9.500 8 9.500-8M5 21l7-6.500M24 21l-7-6.500" fill="none" stroke="#999" strokeWidth=".8" />
    </svg>
  ),
  FaceTime: (
    <svg viewBox="0 0 29 29" className="size-full">
      <rect width="29" height="29" rx="6" fill="#43d85a" />
      <rect x="4.500" y="9" width="13" height="11" rx="3" fill="#f4f4f4" />
      <path d="m19 13 5-4v11l-5-4z" fill="#f4f4f4" />
    </svg>
  ),
  Messages: (
    <svg viewBox="0 0 29 29" className="size-full">
      <rect width="29" height="29" rx="6" fill="#47d95c" />
      <ellipse cx="14.500" cy="13.500" rx="10" ry="8.500" fill="#f6f6f6" />
      <path d="M8 18q0 4-2 5.500 4-.5 6-3z" fill="#f6f6f6" />
    </svg>
  ),
  Maps: (
    <svg viewBox="0 0 29 29" className="size-full">
      <defs><clipPath id="maps"><rect width="29" height="29" rx="6" /></clipPath></defs>
      <g clipPath="url(#maps)">
        <path d="M0 0h29v29H0z" fill="#f2f0ea" />
        <path d="M15 0h14v14L18 6z" fill="#5ed36b" />
        <path d="M17 8 29 20V12z" fill="#5ed36b" />
        <path d="M0 8 8 2v12L0 20z" fill="#6ad57c" />
        <path d="M0 21 7 16v13H0z" fill="#f49ac6" />
        <path d="m17 14 12 11v4H14z" fill="#fbd34c" />
        <path d="M8.500 0h5v14h-5z" fill="#2b7de9" />
        <circle cx="26" cy="2" r="6" fill="none" stroke="#eee" strokeWidth="2" />
      </g>
      <circle cx="11" cy="18" r="7" fill="#2b8cf5" stroke="#fff" strokeWidth="1.200" />
      <path d="m11 13 4 9-4-2-4 2z" fill="#fff" />
    </svg>
  ),
  Photos: (
    <svg viewBox="0 0 29 29" className="size-full">
      <rect width="29" height="29" rx="6" fill="#fff" />
      {petals.map((c, i) => (
        <ellipse key={c} cx="14.500" cy="8" rx="3.800" ry="5.500" fill={c} opacity=".85" transform={`rotate(${i * 45} 14.500 14.500)`} />
      ))}
    </svg>
  ),
  Calendar: (
    <span className="flex size-full flex-col overflow-hidden rounded-md bg-white text-center">
      <span className="h-[9px] bg-[#f5473e] text-[6px] leading-[9px] font-semibold text-white">JAN</span>
      <span className="text-[18px] leading-[19px] font-light text-[#333]">20</span>
    </span>
  ),
  Reminders: (
    <svg viewBox="0 0 29 29" className="size-full">
      <rect width="29" height="29" rx="6" fill="#fdfdfd" />
      <path d="M11 7.500h14M11 14.500h14M11 21.500h14" stroke="#d0d0d0" />
      <circle cx="5.500" cy="7.500" r="2" fill="#2f7cf6" />
      <circle cx="5.500" cy="14.500" r="2" fill="#f04a42" />
      <circle cx="5.500" cy="21.500" r="2" fill="#f5a03a" />
    </svg>
  ),
  Notes: (
    <svg viewBox="0 0 29 29" className="size-full">
      <rect width="29" height="29" rx="6" fill="#fbc921" />
      <path d="M0 8h29v15q0 6-6 6H6q-6 0-6-6z" fill="#f3f1ec" />
      <path d="M2 15h25M2 21h25" stroke="#ddd" strokeWidth=".7" />
    </svg>
  ),
  Freeform: (
    <svg viewBox="0 0 29 29" className="size-full">
      <rect width="29" height="29" rx="6" fill="#fff" />
      <circle cx="11" cy="17.500" r="8" fill="#f46a5a" />
      <rect x="10" y="4" width="15" height="14" rx="2" fill="#4bc8f2" />
      <path d="M3.500 18.500c4 2 5-7 8-7.500 2.500 0-.5 6 .5 7 1.500 1 4-6.500 6-6.500 1.500 0-.5 5 .5 5.500 1 .5 1.500-2 2.500-2s1 1.500 4 1" fill="none" stroke="#173a5e" strokeWidth="1.400" strokeLinecap="round" />
    </svg>
  ),
  'App Store': (
    <svg viewBox="0 0 29 29" className="size-full">
      <rect width="29" height="29" rx="6" fill="#1f8ef5" />
      <path d="m16.500 6-8.500 15M12.500 6 21 21M4.500 17.500h11M19 17.500h5.500" stroke="#fff" strokeWidth="2.300" strokeLinecap="round" />
    </svg>
  ),
  Outlook: <OfficeIcon letter="O" colors={['#2aa0e6', '#1878c8', '#38b6f0', '#0f6cbd']} />,
  Word: <OfficeIcon letter="W" colors={['#41a5ee', '#2b7cd3', '#103f91', '#185abd']} />,
  Settings: (
    <svg viewBox="0 0 29 29" className="size-full">
      <rect width="29" height="29" rx="6" fill="#a9adb1" />
      <circle cx="14.500" cy="14.500" r="11.500" fill="#55585b" stroke="#222" strokeWidth="1.500" strokeDasharray="1.500 .8" />
      <circle cx="14.500" cy="14.500" r="8" fill="#8b8f92" stroke="#222" strokeWidth="1.500" />
      <path d="M14.500 14.500h8M14.500 14.500l-4-7M14.500 14.500l-4 7" stroke="#222" strokeWidth="1.500" />
      <circle cx="14.500" cy="14.500" r="2.500" fill="#999" stroke="#222" />
    </svg>
  ),
  Chrome: <ChromeIcon />,
  Excel: <OfficeIcon letter="X" colors={['#33c481', '#21a366', '#107c41', '#0d6b38']} />,
  Acrobat: (
    <svg viewBox="0 0 29 29" className="size-full">
      <rect width="29" height="29" rx="5" fill="#b30b00" />
      <path d="M6.500 22.500c-2-2 6-5.500 10-6 4-.4 7.500 0 6.500 2-1.500 2-7-2.500-9-6.500-1.500-3.500-1.500-6 0-6 2 0 .8 5.500-1.200 10S8 24 6.500 22.500z" fill="none" stroke="#fff" strokeWidth="1.500" />
    </svg>
  ),
  'Chrome Profile': <ChromeIcon />,
  'Disk Image 1': <DiskFileIcon torn />,
  'Disk Image 2': <DiskFileIcon />,
  'Disk Image 3': <DiskFileIcon />,
  Trash: (
    <svg width="26" height="33" viewBox="0 0 26 33" className="shrink-0">
      <path d="M1 3h24l-4 28q-8 3-16 0z" fill="#e9e9e9" stroke="#f8f8f8" />
      <ellipse cx="13" cy="3" rx="12" ry="2" fill="#dcdcdc" stroke="#fff" />
      <path d="m8 8 2 21M18 8l-2 21" stroke="#dedede" />
    </svg>
  ),
};

const running = ['Finder', 'Mail', 'Notes', 'Word', 'Chrome', 'Excel'];
const badged = ['Reminders', 'Settings'];
const dockGroups = [
  Object.keys(dockIcons).slice(0, 15),
  Object.keys(dockIcons).slice(15, 19),
  Object.keys(dockIcons).slice(19),
];

function DockItem({ name }) {
  return (
    <button type="button" aria-label={name} className="relative flex size-[29px] shrink-0 items-center justify-center">
      {dockIcons[name]}
      {badged.includes(name) && (
        <span className="absolute -top-[4px] -right-[5px] flex size-[14px] items-center justify-center rounded-full bg-[#f5453d] text-[8px] text-white">1</span>
      )}
      {name === 'Chrome Profile' && (
        <span className="absolute -top-[4px] -right-[5px] flex size-[14px] items-center justify-center rounded-full bg-[#d9d9d9]">
          <span className="h-2 w-1 border border-gray-700" />
        </span>
      )}
      {running.includes(name) && <span className="absolute -bottom-[9px] size-[3px] rounded-full bg-gray-700" />}
    </button>
  );
}

function Dock() {
  return (
    <div className="absolute right-[33px] bottom-1 left-[33px] flex h-[46px] items-start justify-between rounded-xl border border-[#e3e3e3] bg-[#d9d9d9] px-[6px] pt-[6px]">
      {dockGroups.flatMap((group, i) => [
        i > 0 ? <span key={`divider-${i}`} className="mx-[3px] h-[33px] w-px bg-[#b3b3b3]" /> : null,
        ...group.map((name) => <DockItem key={name} name={name} />),
      ])}
    </div>
  );
}

export default function App() {
  const [condition, setCondition] = useState('Between');
  const [checked, setChecked] = useState(() => Object.fromEntries(states.map((state) => [state, true])));

  const handleToggle = (state) => {
    setChecked((prev) => ({ ...prev, [state]: !prev[state] }));
  };

  return (
    <div className="relative h-screen overflow-hidden bg-[#1b1e2b] font-['Inter',sans-serif]">
      <MenuBar />
      <BrowserWindow />
      <main className="absolute top-[18px] right-[26px] bottom-[52px] left-0 flex flex-col overflow-hidden rounded-lg bg-white shadow-2xl">
        <TitleBar />
        <RibbonTabs />
        <Ribbon />
        <FormulaBar />
        <div className="flex min-h-0 flex-1">
          <div className="flex min-w-0 flex-1 flex-col">
            <Sheet />
            <SheetTabs />
          </div>
          <TaskPane />
        </div>
        <StatusBar />
        <FilterDialog checked={checked} onToggle={handleToggle} />
        <FilterMenu selected={condition} onSelect={setCondition} />
      </main>
      <Dock />
    </div>
  );
}
